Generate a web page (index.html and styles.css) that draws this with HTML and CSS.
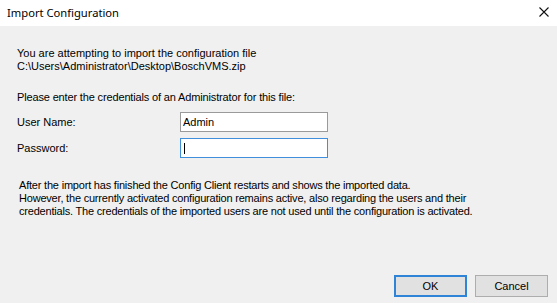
FILE: index.html
```html
<!DOCTYPE html>
<html>
<head>
<meta charset="utf-8">
<link rel="stylesheet" href="styles.css">
</head>
<body>
<div class="window">
  <div class="titlebar">
    <span class="title">Import Configuration</span>
    <svg class="close" width="10" height="10" viewBox="0 0 10 10"><path d="M0.5 0.5 L9.5 9.5 M9.5 0.5 L0.5 9.5" stroke="#111" stroke-width="1.1" fill="none"/></svg>
  </div>
  <div class="content">
    <p class="para">You are attempting to import the configuration file<br>C:\Users\Administrator\Desktop\BoschVMS.zip</p>
    <p class="para prompt">Please enter the credentials of an Administrator for this file:</p>
    <div class="form">
      <div class="row">
        <span class="label">User Name:</span>
        <div class="field">Admin</div>
      </div>
      <div class="row">
        <span class="label">Password:</span>
        <div class="field focused"><span class="caret"></span></div>
      </div>
    </div>
    <p class="para info">After the import has finished the Config Client restarts and shows the imported data.<br>However, the currently activated configuration remains active, also regarding the users and their<br>credentials. The credentials of the imported users are not used until the configuration is activated.</p>
    <div class="buttons">
      <div class="btn default">OK</div>
      <div class="btn">Cancel</div>
    </div>
  </div>
</div>
</body>
</html>
```
FILE: styles.css
```css
html, body {
  margin: 0;
  padding: 0;
}
body {
  width: 557px;
  height: 303px;
  overflow: hidden;
  background: #f0f0f0;
}
.window {
  display: flex;
  flex-direction: column;
  height: 303px;
  font-family: "Liberation Sans", Arial, sans-serif;
  font-size: 11px;
  color: #000;
}
.titlebar {
  height: 26px;
  background: #fff;
  display: flex;
  align-items: center;
  justify-content: space-between;
  padding: 0 8px 0 7px;
  box-sizing: border-box;
  flex: none;
}
.title {
  font-family: "Noto Sans", "Open Sans", sans-serif;
  font-size: 11.2px;
  color: #000;
  margin-top: -2px;
}
.close {
  display: block;
  margin-top: -2px;
}
.content {
  flex: 1;
  display: flex;
  flex-direction: column;
  padding: 21px 9px 6px 17px;
}
.para {
  margin: 0;
  line-height: 13px;
}
.prompt {
  margin-top: 18px;
  letter-spacing: -0.15px;
}
.form {
  display: flex;
  flex-direction: column;
  gap: 6px;
  margin-top: 8px;
}
.row {
  display: flex;
  align-items: center;
}
.label {
  width: 163px;
  line-height: 13px;
}
.field {
  width: 148px;
  height: 20px;
  box-sizing: border-box;
  border: 1px solid #9a9a9a;
  background: #fff;
  padding: 0 2px;
  line-height: 18px;
  display: flex;
  align-items: center;
}
.field.focused {
  border-color: #3f8fdd;
}
.caret {
  display: inline-block;
  width: 1px;
  height: 11px;
  background: #000;
  margin-left: 1px;
}
.info {
  margin-top: 21px;
  margin-left: 2px;
  letter-spacing: -0.2px;
}
.buttons {
  margin-top: auto;
  display: flex;
  justify-content: flex-end;
  gap: 8px;
}
.btn {
  width: 73px;
  height: 22px;
  box-sizing: border-box;
  border: 1px solid #adadad;
  background: #e1e1e1;
  display: flex;
  align-items: center;
  justify-content: center;
}
.btn.default {
  border: 2px solid #2f84d8;
}
```
